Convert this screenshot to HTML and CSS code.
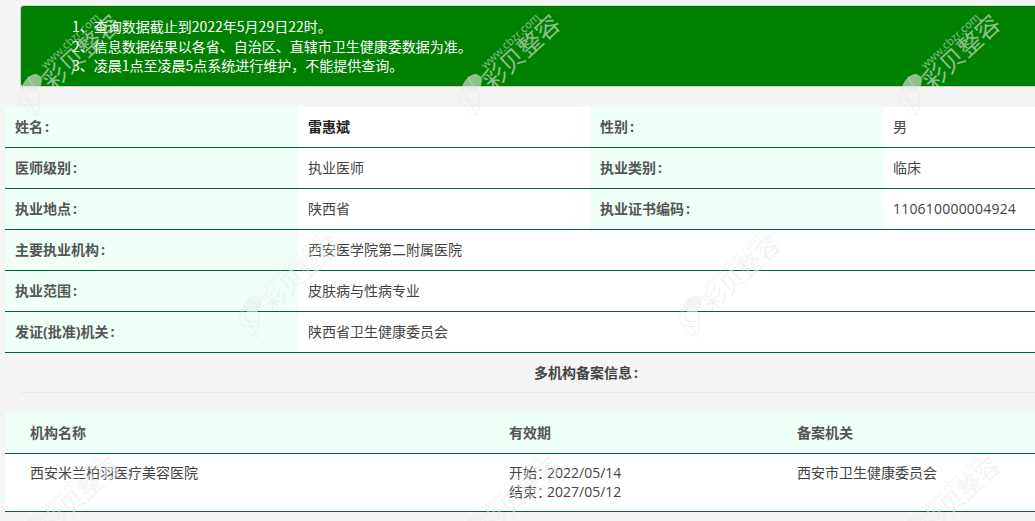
FILE: index.html
```html
<!DOCTYPE html>
<html lang="zh-CN">
<head>
<meta charset="utf-8">
<title>医师信息查询</title>
<link rel="stylesheet" href="styles.css">
</head>
<body>
<svg class="defs" width="0" height="0" aria-hidden="true">
  <symbol id="shell" viewBox="0 0 24 44">
    <path class="shell-top" d="M4 15C5 8 11 2 17 1c3 0 6 2 7 5 0 5-2 9-5 12-4 1-10 1-15-3Z"/>
    <path class="shell-line" d="M4 15C1 21 1 27 5 32c3 5 8 9 14 11 2-8 3-17 1-25M4 15c3 7 7 13 15 28M4 22c4 5 9 7 15 5M5 31c4 2 10 2 15 1M10 3c2 5 4 9 9 15"/>
  </symbol>
</svg>
<main class="page">
  <div class="notice">
    <p>1、查询数据截止到2022年5月29日22时。</p>
    <p>2、信息数据结果以各省、自治区、直辖市卫生健康委数据为准。</p>
    <p>3、凌晨1点至凌晨5点系统进行维护，不能提供查询。</p>
  </div>
  <table class="info">
    <colgroup><col class="c1"><col class="c2"><col class="c3"><col class="c4"></colgroup>
    <tbody>
      <tr><th>姓名<span class="colon">:</span></th><td class="strong">雷惠斌</td><th>性别<span class="colon">:</span></th><td>男</td></tr>
      <tr><th>医师级别<span class="colon">:</span></th><td>执业医师</td><th>执业类别<span class="colon">:</span></th><td>临床</td></tr>
      <tr><th>执业地点<span class="colon">:</span></th><td>陕西省</td><th>执业证书编码<span class="colon">:</span></th><td class="code">110610000004924</td></tr>
      <tr><th>主要执业机构<span class="colon">:</span></th><td colspan="3">西安医学院第二附属医院</td></tr>
      <tr><th>执业范围<span class="colon">:</span></th><td colspan="3">皮肤病与性病专业</td></tr>
      <tr><th>发证(批准)机关<span class="colon">:</span></th><td colspan="3">陕西省卫生健康委员会</td></tr>
    </tbody>
  </table>
  <h2 class="section-title">多机构备案信息<span class="colon">:</span></h2>
  <hr class="rule">
  <table class="orgs">
    <thead>
      <tr><th class="col-name">机构名称</th><th class="col-date">有效期</th><th class="col-auth">备案机关</th></tr>
    </thead>
    <tbody>
      <tr>
        <td>西安米兰柏羽医疗美容医院</td>
        <td class="dates">开始：<span class="date">2022/05/14</span><br>结束：<span class="date">2027/05/12</span></td>
        <td>西安市卫生健康委员会</td>
      </tr>
    </tbody>
  </table>
</main>
<div class="marks" aria-hidden="true">
  <div class="mark-row">
    <div class="mark"><svg class="mark-icon"><use href="#shell"/></svg><span class="mark-url">www.cbzr.com</span><span class="mark-name">彩贝整容</span></div>
    <div class="mark"><svg class="mark-icon"><use href="#shell"/></svg><span class="mark-url">www.cbzr.com</span><span class="mark-name">彩贝整容</span></div>
    <div class="mark"><svg class="mark-icon"><use href="#shell"/></svg><span class="mark-url">www.cbzr.com</span><span class="mark-name">彩贝整容</span></div>
  </div>
  <div class="mark-row mark-row-shift">
    <div class="mark"><svg class="mark-icon"><use href="#shell"/></svg><span class="mark-url">www.cbzr.com</span><span class="mark-name">彩贝整容</span></div>
    <div class="mark"><svg class="mark-icon"><use href="#shell"/></svg><span class="mark-url">www.cbzr.com</span><span class="mark-name">彩贝整容</span></div>
  </div>
  <div class="mark-row">
    <div class="mark"><svg class="mark-icon"><use href="#shell"/></svg><span class="mark-url">www.cbzr.com</span><span class="mark-name">彩贝整容</span></div>
    <div class="mark"><svg class="mark-icon"><use href="#shell"/></svg><span class="mark-url">www.cbzr.com</span><span class="mark-name">彩贝整容</span></div>
    <div class="mark"><svg class="mark-icon"><use href="#shell"/></svg><span class="mark-url">www.cbzr.com</span><span class="mark-name">彩贝整容</span></div>
  </div>
</div>
</body>
</html>
```

FILE: styles.css
```css
* { box-sizing: border-box; }
html, body { height: 100%; }
body {
  margin: 0;
  overflow: hidden;
  position: relative;
  background: #f5f5f5;
  color: #333;
  font: 14px/20px "Open Sans", "Noto Sans CJK SC", sans-serif;
}
.defs { position: absolute; }
.page { padding: 5px 0 0 5px; width: 1035px; }
.notice {
  margin-left: 15px;
  height: 82px;
  padding: 11px 0 10px 51px;
  background: #008000;
  border: 1px solid #c9d6c0;
  border-width: 1px 0 1px 1px;
  border-radius: 4px 0 0 4px;
  color: #fff;
  font-family: "Noto Sans CJK SC", sans-serif;
  line-height: 19.6px;
}
.notice p { margin: 0; }
table { border-collapse: separate; border-spacing: 0; table-layout: fixed; background: #fff; }
.info { width: 1171px; margin-top: 20px; }
.c1, .c3, .c4 { width: 293px; }
.c2 { width: 292px; }
.info th, .info td {
  height: 41px;
  padding: 0 10px;
  border-bottom: 1px solid #006633;
  text-align: left;
  vertical-align: middle;
}
.info th { background: #f0fff8; color: #555; font-weight: 700; }
.info td { color: #444; }
.info .strong { color: #222; font-weight: 700; }
.info .code { letter-spacing: 0.2px; }
.colon { margin-left: 2px; }
.section-title {
  margin: 0;
  height: 39px;
  padding-left: 529px;
  font-size: 14px;
  font-weight: 700;
  line-height: 40px;
  color: #444;
}
.rule { margin: 0 0 20px 15px; border: 0; border-top: 1px solid #eaeaea; }
.orgs { width: 1030px; }
.orgs th, .orgs td { padding: 0 25px; text-align: left; }
.orgs th {
  height: 41px;
  background: #f0fff8;
  border-bottom: 1px solid #006633;
  color: #555;
  font-weight: 700;
}
.orgs td {
  height: 58px;
  padding-top: 9px;
  padding-bottom: 8px;
  border-bottom: 1px solid #006633;
  color: #444;
  vertical-align: top;
}
.orgs .dates { line-height: 19px; }
.date { margin-left: -4px; }
.col-name { width: 479px; }
.col-date { width: 288px; }
.col-auth { width: 263px; }
.marks {
  position: absolute;
  inset: 0;
  overflow: hidden;
  pointer-events: none;
}
.mark-row { display: flex; height: 221px; }
.mark-row-shift { padding-left: 220px; }
.mark { position: relative; flex: 0 0 440px; height: 221px; color: rgba(236, 236, 236, 0.6); }
.mark-icon { position: absolute; left: 18px; top: 73px; width: 24px; height: 44px; overflow: visible; }
.shell-top { fill: rgba(236, 236, 236, 0.6); }
.shell-line { fill: none; stroke: rgba(225, 225, 225, 0.6); stroke-width: 0.8; }
.mark-name, .mark-url {
  position: absolute;
  white-space: nowrap;
  transform: translate(-50%, -50%) rotate(-43deg);
}
.mark-name { left: 81px; top: 52px; font-size: 24px; line-height: 24px; font-weight: 400; }
.mark-url { left: 70px; top: 41px; font: 11px/12px "Open Sans", sans-serif; }
```
